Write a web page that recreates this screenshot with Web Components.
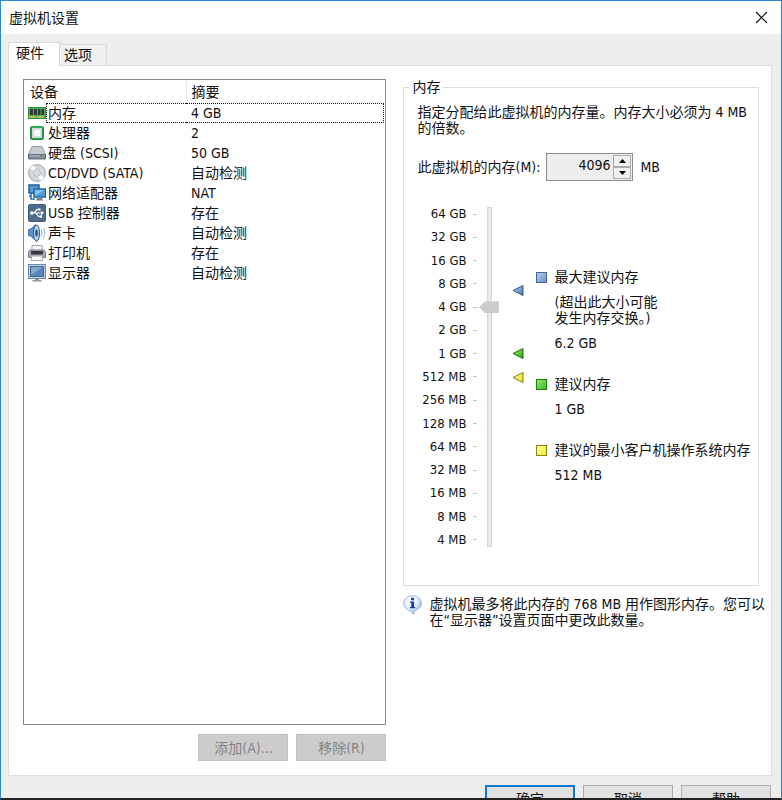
<!DOCTYPE html>
<html lang="zh-CN">
<head>
    <meta charset="UTF-8">
    <meta name="viewport" content="width=device-width, initial-scale=1.0">
    <title>虚拟机设置</title>
    <style>
        body {
            margin: 0;
            color: #111;
            font: 14px/16px "DejaVu Sans Condensed", "Noto Sans CJK SC", sans-serif;
        }
    </style>
</head>
<body>

<!-- Window frame: title bar, content, footer buttons -->
<template id="vm-dialog-template">
    <style>
        :host {
            display: flex;
            flex-direction: column;
            box-sizing: border-box;
            height: 100vh;
            overflow: hidden;
            background: #eee;
            border: 1px solid #2a86d8;
            border-bottom: 2px solid #222;
        }
        header {
            display: flex;
            align-items: center;
            justify-content: space-between;
            height: 33px;
            flex: none;
            padding: 0 13px 0 8px;
            background: #fff;
        }
        h1 { margin: 0; font-size: 14px; font-weight: normal; }
        header button { display: flex; padding: 0; border: 0; background: none; }
        main { display: flex; flex-direction: column; flex: 1; min-height: 0; padding: 8px 9px 0 7px; }
        footer {
            display: flex;
            justify-content: flex-end;
            align-items: flex-start;
            gap: 8px;
            flex: none;
            height: 13px;
            padding: 9px 10px 0;
        }
    </style>
    <header>
        <h1><slot name="title"></slot></h1>
        <button type="button" aria-label="关闭">
            <svg width="13" height="13" viewBox="0 0 13 13"><path d="M1 1l11 11M12 1L1 12" stroke="#111" stroke-width="1.2" fill="none"/></svg>
        </button>
    </header>
    <main><slot></slot></main>
    <footer><slot name="footer"></slot></footer>
</template>

<template id="vm-button-template">
    <style>
        :host { display: block; flex: none; }
        button {
            display: block;
            box-sizing: border-box;
            width: 90px;
            height: 27px;
            padding: 0;
            border: 1px solid #adadad;
            background: #e1e1e1;
            color: inherit;
            font: inherit;
        }
        button:disabled { background: #ccc; border-color: #bfbfbf; color: #838383; }
        :host([primary]) button { border: 2px solid #0f78d4; }
    </style>
    <button type="button"><slot></slot></button>
</template>

<template id="vm-tabs-template">
    <style>
        :host { display: flex; flex-direction: column; flex: 1; min-height: 0; }
        nav { display: flex; align-items: flex-end; flex: none; }
        button {
            height: 21px;
            padding: 0 14px 0 4px;
            border: 1px solid #d9d9d9;
            border-width: 1px 1px 0 0;
            background: #f0f0f0;
            color: inherit;
            font: inherit;
        }
        button[aria-selected="true"] {
            height: 24px;
            padding: 0 15px 3px 7px;
            margin-bottom: -1px;
            border-left-width: 1px;
            background: #fff;
            z-index: 1;
        }
        section {
            flex: 1;
            display: grid;
            grid-template-columns: 364fr 356fr;
            column-gap: 17px;
            min-height: 0;
            padding: 13px 12px 14px 14px;
            border: 1px solid #dcdcdc;
            background: #fff;
        }
    </style>
    <nav role="tablist">
        <button type="button" role="tab" aria-selected="true">硬件</button>
        <button type="button" role="tab" aria-selected="false">选项</button>
    </nav>
    <section role="tabpanel"><slot></slot></section>
</template>

<template id="vm-device-list-template">
    <style>
        :host { display: flex; flex-direction: column; gap: 9px; min-width: 0; min-height: 0; }
        .list { flex: 1; border: 1px solid #828790; padding: 1px 0 1px 1px; min-height: 0; }
        table { width: 100%; border-collapse: collapse; table-layout: fixed; }
        th, td { padding: 0 5px; text-align: left; font-weight: normal; white-space: nowrap; }
        th { height: 22px; }
        th:first-child { width: 161px; box-sizing: border-box; padding-left: 5px; border-right: 1px solid #e5e5e5; }
        td { height: 20px; }
        td:first-child { padding: 0 0 0 3px; }
        .device { display: flex; align-items: center; }
        .name { flex: 1; height: 18px; line-height: 18px; padding-left: 1px; border: 1px solid transparent; border-right: 0; }
        tr.focused .name { border: 1px dotted #111; border-right: 0; }
        tr.focused .summary { display: block; height: 18px; line-height: 18px; border: 1px dotted #111; border-left: 0; margin: 0 -4px 0 -5px; padding-left: 5px; }
        .actions { display: flex; justify-content: flex-end; gap: 8px; }
        vm-icon { flex: none; }
    </style>
    <div class="list">
        <table>
            <thead><tr><th scope="col">设备</th><th scope="col">摘要</th></tr></thead>
            <tbody></tbody>
        </table>
    </div>
    <div class="actions"><slot name="actions"></slot></div>
</template>

<template id="vm-group-template">
    <style>
        :host { display: block; }
        fieldset { margin: 0; min-width: 0; padding: 8px 13px 38px; border: 1px solid #dcdcdc; }
        legend { margin-left: -8px; padding: 0 3px; line-height: 17px; }
    </style>
    <fieldset>
        <legend><slot name="legend"></slot></legend>
        <slot></slot>
    </fieldset>
</template>

<template id="vm-memory-input-template">
    <style>
        :host { display: flex; align-items: center; gap: 7px; white-space: nowrap; }
        label { margin-right: -1px; }
        .spin { display: flex; box-sizing: border-box; width: 87px; height: 28px; border: 1px solid #8c8c8c; background: #eee; }
        input {
            flex: 1;
            min-width: 0;
            padding: 0 2px 4px;
            border: 0;
            background: none;
            color: inherit;
            font: inherit;
            text-align: right;
        }
        .arrows { display: flex; flex-direction: column; width: 18px; padding: 1px; }
        .arrows button { flex: 1; display: flex; align-items: center; justify-content: center; padding: 0; border: 1px solid #acacac; background: #f0f0f0; }
    </style>
    <label for="memory">此虚拟机的内存(M):</label>
    <div class="spin">
        <input id="memory" type="text" inputmode="numeric" value="4096">
        <div class="arrows">
            <button type="button" aria-label="增加"><svg width="7" height="4"><path d="M0 4L3.5 0 7 4z" fill="#000"/></svg></button>
            <button type="button" aria-label="减少"><svg width="7" height="4"><path d="M0 0l3.500 4L7 0z" fill="#000"/></svg></button>
        </div>
    </div>
    <span>MB</span>
</template>

<template id="vm-memory-scale-template">
    <style>
        :host { display: flex; height: 340px; }
        ol {
            display: flex;
            flex-direction: column;
            justify-content: space-between;
            width: 60px;
            margin: 0;
            padding: 0;
            list-style: none;
            font-size: 13px;
        }
        li { display: flex; align-items: center; justify-content: flex-end; gap: 7px; line-height: 14px; white-space: nowrap; }
        li::after { content: ""; width: 4px; height: 1px; background: #c4c4c4; }
        input {
            appearance: none;
            writing-mode: vertical-lr;
            direction: rtl;
            width: 20px;
            height: 340px;
            margin: 0 13px 0 2px;
            background: none;
        }
        input::-webkit-slider-runnable-track {
            width: 5px;
            height: 340px;
            box-sizing: border-box;
            border: 1px solid #d6d6d6;
            background: #e7eaea;
        }
        input::-webkit-slider-thumb {
            appearance: none;
            width: 20px;
            height: 12px;
            margin-left: -9px;
            background: #ccc;
            clip-path: polygon(0 50%, 30% 0, 100% 0, 100% 100%, 30% 100%);
        }
        svg { flex: none; }
    </style>
    <ol></ol>
    <input type="range" min="0" max="14" value="10" aria-label="内存大小">
    <svg width="12" height="340" viewBox="0 0 12 340">
        <defs>
            <linearGradient id="b" x2="1" y2="1"><stop stop-color="#c5daf2"/><stop offset="1" stop-color="#3f70ae"/></linearGradient>
            <linearGradient id="g" x2="1" y2="1"><stop stop-color="#a8ef8c"/><stop offset="1" stop-color="#25a10c"/></linearGradient>
            <linearGradient id="y" x2="1" y2="1"><stop stop-color="#ffffb0"/><stop offset="1" stop-color="#e4df16"/></linearGradient>
        </defs>
        <path d="M1 83.500L11 78.500v10z" fill="url(#b)" stroke="#315787"/>
        <path d="M1 146.500l10-5v10z" fill="url(#g)" stroke="#17720a"/>
        <path d="M1 170.500l10-5v10z" fill="url(#y)" stroke="#80800c"/>
    </svg>
</template>

<template id="vm-hint-template">
    <style>
        :host { display: grid; grid-template-columns: 11px 1fr; column-gap: 7px; row-gap: 9px; white-space: nowrap; }
        i {
            box-sizing: border-box;
            height: 11px;
            margin-top: 3px;
            border: 1px solid #46658f;
            background: linear-gradient(135deg, #b4cff0, #6893c8);
        }
        :host([color="green"]) i { border-color: #1c7c0c; background: linear-gradient(135deg, #98ec79, #34b81b); }
        :host([color="yellow"]) i { border-color: #85850f; background: linear-gradient(135deg, #ffffa0, #eeea30); }
        ::slotted(*) { grid-column: 2; }
    </style>
    <i></i>
    <slot></slot>
</template>

<template id="vm-memory-page-template">
    <style>
        :host { display: block; min-width: 0; }
        p { margin: 0; white-space: nowrap; }
        vm-memory-input { margin: 17px 0 26px; }
        .body { display: flex; }
        .hints { display: flex; flex-direction: column; gap: 25px; margin: 62px 0 0 12px; }
        .note { display: flex; gap: 7px; margin-top: 9px; }
        .note p { padding-top: 1px; }
        .note svg { flex: none; }
    </style>
    <vm-group>
        <span slot="legend">内存</span>
        <p>指定分配给此虚拟机的内存量。内存大小必须为 4 MB<br>的倍数。</p>
        <vm-memory-input></vm-memory-input>
        <div class="body">
            <vm-memory-scale></vm-memory-scale>
            <div class="hints">
                <vm-hint>
                    <span>最大建议内存</span>
                    <span>(超出此大小可能<br>发生内存交换。)</span>
                    <span>6.2 GB</span>
                </vm-hint>
                <vm-hint color="green">
                    <span>建议内存</span>
                    <span>1 GB</span>
                </vm-hint>
                <vm-hint color="yellow">
                    <span>建议的最小客户机操作系统内存</span>
                    <span>512 MB</span>
                </vm-hint>
            </div>
        </div>
    </vm-group>
    <div class="note">
        <svg width="19" height="20" viewBox="0 0 19 20">
            <defs><radialGradient id="n" cx=".4" cy=".3" r=".8"><stop stop-color="#fff"/><stop offset=".5" stop-color="#e0edfa"/><stop offset="1" stop-color="#5f97d0"/></radialGradient></defs>
            <path d="M9.500.600C4.500.600.700 4 .700 8.300c0 3.700 2.800 6.700 6.500 7.500l3.600 3.600.4-3.600c4-.700 7.100-3.700 7.100-7.500C18.300 4 14.400.600 9.500.600z" fill="url(#n)" stroke="#8fb0d0" stroke-width=".8"/>
            <circle cx="9.500" cy="4" r="1.600" fill="#1536a8"/>
            <path d="M7 6.500h4v5.500h1.300v1.300H7V12h1.300V7.800H7z" fill="#1536a8"/>
        </svg>
        <p>虚拟机最多将此内存的 768 MB 用作图形内存。您可以<br>在“显示器”设置页面中更改此数量。</p>
    </div>
</template>

<script>
    // Base class: clones its template into an open shadow root
    class VmElement extends HTMLElement {
        constructor() {
            super();
            this.attachShadow({mode: 'open'});
            const template = document.getElementById(this.localName + '-template');
            if (template) {
                this.shadowRoot.appendChild(template.content.cloneNode(true));
            }
        }
    }

    const ICONS = {
        memory: `<rect x=".5" y="3.500" width="17" height="11" fill="#48b554" stroke="#2b9140"/>
            <path d="M2 5h3v6H2zM6 5h3v6H6zM10 5h2.500v6H10zM13.500 5H16v6h-2.500z" fill="#343b36"/>
            <path d="M1 13h16" stroke="#e8bb4c" stroke-width="1.500" stroke-dasharray="7 1"/>`,
        cpu: `<rect x="3" y="3" width="12" height="12" rx="1" fill="#e9eeea" stroke="#219344" stroke-width="2"/>
            <rect x="5" y="5" width="8" height="8" fill="#f8f9f8" stroke="#b7c9ba"/><path d="M3 3h12" stroke="#42b965"/>`,
        disk: `<path d="M4 2.500h10l3.500 8H.5z" fill="#c6ccd2" stroke="#9299a1"/>
            <path d="M.5 10.500h17V15h-17z" fill="#7c8791" stroke="#67727c"/><path d="M2 12h10" stroke="#bac3ca"/><circle cx="15" cy="12.500" r="1" fill="#83c653"/>`,
        cd: `<circle cx="9" cy="9" r="8.400" fill="#d3d9df" stroke="#9da6b0"/>
            <path d="M9 9L2 4.500A8 8 0 0 1 6 1.500zM9 9l7 4.500a8 8 0 0 1-4 3z" fill="#fff"/><circle cx="9" cy="9" r="3.300" fill="#edf0f3" stroke="#abb4be"/><circle cx="9" cy="9" r="1.200" fill="#fff" stroke="#9ba4ae" stroke-width=".6"/>`,
        network: `<rect x="1" y="1" width="10" height="8" fill="#5799d5" stroke="#265f9c" stroke-width="1.500"/>
            <path d="M3 9v6h4M3 12H1" stroke="#326ba5" stroke-width="1.500" fill="none"/>
            <rect x="6" y="5" width="11.300" height="8" fill="#81c4f3" stroke="#24619f" stroke-width="1.500"/><path d="M7 12l9-6v6z" fill="#509fdf"/><path d="M9 13.500h5l1 3H8z" fill="#74879a"/>`,
        usb: `<rect x=".5" y=".5" width="17" height="17" rx="1.500" fill="#4e6d8b" stroke="#3d5b79"/>
            <path d="M3 9h11M6 9l3-3.500h2M8 9l2.500 3.500h2" stroke="#fff" stroke-width="1.200" fill="none"/>
            <circle cx="3.800" cy="9" r="1.800" fill="#fff"/><path d="M13 6.800L16 9l-3 2.200z" fill="#fff"/><circle cx="11.300" cy="5.500" r="1.300" fill="#fff"/><path d="M11.500 11.300H14v2.400h-2.500z" fill="#fff"/>`,
        sound: `<path d="M.7 5.500L3 5 7.500.7c4 2 5 13 1.500 16.600L3.500 12.500.7 11.500z" fill="#5d91ca" stroke="#3769a5"/>
            <ellipse cx="8.500" cy="9" rx="3" ry="8" fill="#b5d5f1" stroke="#2c5f9c"/><ellipse cx="8.500" cy="9" rx="1.300" ry="3.500" fill="#24548f"/>
            <path d="M13 5.500c1.200 2 1.200 5 0 7M15.200 4c2 3 2 7 0 10" stroke="#82b1dd" fill="none"/>`,
        printer: `<path d="M4 1.500h10V7H4z" fill="#f5f5f7" stroke="#a6a5ad"/>
            <path d="M2 6h14l1.500 2v5.500H.5V8z" fill="#aaa8b5" stroke="#7f7d8c"/><path d="M3 7h12v3.500H3z" fill="#393944"/>
            <path d="M4 12h10l1 4.500H3z" fill="#fff" stroke="#aaa9b3"/>`,
        display: `<rect x=".5" y=".5" width="17" height="14" fill="#c3cfdb" stroke="#7088a1"/>
            <rect x="2.500" y="2.500" width="13" height="10" fill="#5686b8" stroke="#3d6894"/><path d="M3 3h12L3 11z" fill="#83a9ce"/>
            <path d="M7 15h4v1h2.500v1.500h-9V16H7z" fill="#8b98a5"/>`
    };

    class VmIcon extends VmElement {
        connectedCallback() {
            this.shadowRoot.innerHTML = `
                <style>:host { display: block; width: 18px; height: 18px; } svg { display: block; }</style>
                <svg width="18" height="18" viewBox="0 0 18 18" aria-hidden="true">${ICONS[this.getAttribute('name')]}</svg>`;
        }
    }

    const DEVICES = [
        ['memory', '内存', '4 GB'],
        ['cpu', '处理器', '2'],
        ['disk', '硬盘 (SCSI)', '50 GB'],
        ['cd', 'CD/DVD (SATA)', '自动检测'],
        ['network', '网络适配器', 'NAT'],
        ['usb', 'USB 控制器', '存在'],
        ['sound', '声卡', '自动检测'],
        ['printer', '打印机', '存在'],
        ['display', '显示器', '自动检测']
    ];

    class VmDeviceList extends VmElement {
        connectedCallback() {
            this.shadowRoot.querySelector('tbody').innerHTML = DEVICES.map(([icon, name, summary], i) => `
                <tr class="${i === 0 ? 'focused' : ''}">
                    <td><div class="device"><vm-icon name="${icon}"></vm-icon><span class="name">${name}</span></div></td>
                    <td><span class="summary">${summary}</span></td>
                </tr>`).join('');
        }
    }

    class VmMemoryScale extends VmElement {
        connectedCallback() {
            const sizes = ['64 GB', '32 GB', '16 GB', '8 GB', '4 GB', '2 GB', '1 GB', '512 MB', '256 MB', '128 MB', '64 MB', '32 MB', '16 MB', '8 MB', '4 MB'];
            this.shadowRoot.querySelector('ol').innerHTML = sizes.map(size => `<li>${size}</li>`).join('');
        }
    }

    class VmButton extends VmElement {
        connectedCallback() {
            this.shadowRoot.querySelector('button').disabled = this.hasAttribute('disabled');
        }
    }

    customElements.define('vm-icon', VmIcon);
    customElements.define('vm-button', VmButton);
    customElements.define('vm-group', class extends VmElement {});
    customElements.define('vm-hint', class extends VmElement {});
    customElements.define('vm-memory-input', class extends VmElement {});
    customElements.define('vm-memory-scale', VmMemoryScale);
    customElements.define('vm-memory-page', class extends VmElement {});
    customElements.define('vm-device-list', VmDeviceList);
    customElements.define('vm-tabs', class extends VmElement {});
    customElements.define('vm-dialog', class extends VmElement {});
</script>

<vm-dialog>
    <span slot="title">虚拟机设置</span>
    <vm-tabs>
        <vm-device-list>
            <vm-button slot="actions" disabled>添加(A)...</vm-button>
            <vm-button slot="actions" disabled>移除(R)</vm-button>
        </vm-device-list>
        <vm-memory-page></vm-memory-page>
    </vm-tabs>
    <vm-button slot="footer" primary>确定</vm-button>
    <vm-button slot="footer">取消</vm-button>
    <vm-button slot="footer">帮助</vm-button>
</vm-dialog>

</body>
</html>
